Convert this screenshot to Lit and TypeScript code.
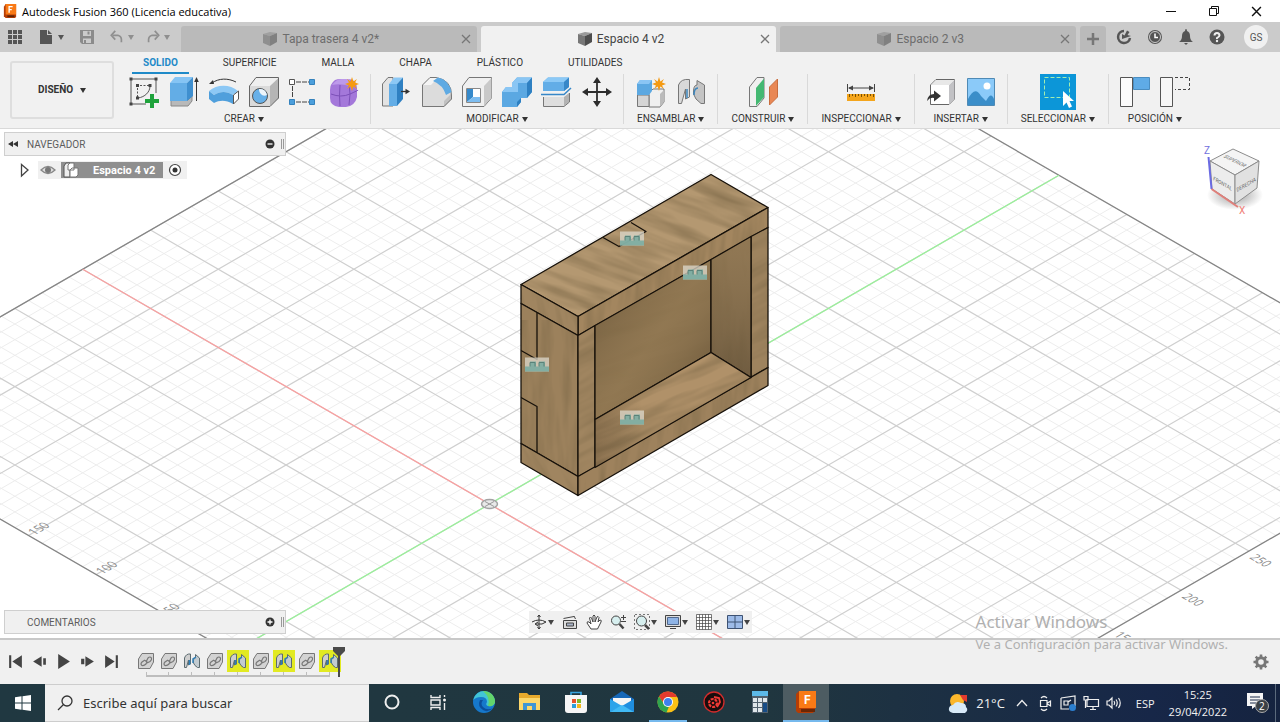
import { LitElement, html, svg, css, TemplateResult } from 'lit';
import { customElement } from 'lit/decorators.js';
import { classMap } from 'lit/directives/class-map.js';

type Glyph = TemplateResult;

/* ---------- ribbon glyphs, 32 x 32 ---------- */
const star = (x: number, y: number) =>
  svg`<path transform="translate(${x} ${y})" fill="#f59a12" d="M0-7 1.4-2.6 5-5 3-1.4 7 0 3 1.4 5 5 1.4 2.6 0 7-1.4 2.6-5 5-3 1.4-7 0-3-1.4-5-5-1.4-2.6Z"/>`;

const ribbon: Record<string, Glyph> = {
  sketch: svg`<g fill="none" stroke="#555"><path d="M4 3H27M3 4V27M28 4V17M4 28H18"/><path d="M9.500 21V9.500H22" stroke-dasharray="2 1.500"/><path d="M22 10c0 6-5 11-12 12"/></g>
    <g fill="#444"><path d="M1.500 1.500h3v3h-3zM26.500 1.500h3v3h-3zM1.500 26.500h3v3h-3zM8 8h3v3h-3zM20.500 8h3v3h-3zM8 20.500h3v3h-3z"/></g>
    <path fill="#1fa33c" d="M22 18h4v5h5v4h-5v5h-4v-5h-5v-4h5z"/>`,
  extrude: svg`<path fill="#b9b9b9" stroke="#888" d="M3 28V24H20L24 20V25L20 30H3Z"/><path fill="#63ade6" d="M2 25V7H19V25Z"/><path fill="#85c4f4" d="M2 7 7 1H25L19 7Z"/><path fill="#3f8fcf" d="M19 7 25 1V20L19 25Z"/><path stroke="#333" fill="none" d="M28.500 25V5"/><path fill="#333" d="M28.500 1 30.800 6H26.200Z"/>`,
  revolve: svg`<path fill="none" stroke="#333" d="M4 7C11 2 20 2 28 6"/><path fill="#333" d="M1 8 5 4 6 8Z"/><path fill="#8cc8f5" d="M1 15C9 8 22 8 30 15L25 19C19 15 12 15 6 19Z"/><path fill="#4f9fdc" d="M1 15 6 19C12 15 19 15 25 19V28C18 24 12 24 6 27L1 23Z"/><path fill="#fff" stroke="#555" d="M25.500 19 30.500 15V23L25.500 28Z"/>`,
  hole: svg`<path fill="#dadada" d="M1 10H22V30H1Z"/><path fill="#efefef" d="M1 10 8 1.500H31L22 10Z"/><path fill="#b5b5b5" d="M22 10 31 1.500V22L22 30Z"/><path fill="none" stroke="#666" d="M1.500 10 8 1.500H30.500V22L22 30.500H1.500Z"/><circle cx="12" cy="20" r="7.500" fill="#68b0e8" stroke="#555"/><path fill="#eef5fb" d="M11 13A7 7 0 0 1 19 19C15 21 11 18 11 13Z"/>`,
  pattern: svg`<path fill="none" stroke="#444" d="M8 6H21M4.500 10V22M8 26H21" stroke-dasharray="5 1"/><path fill="#fff" stroke="#555" d="M1.500 3.500h5v5h-5z"/><path fill="#4c9fdc" stroke="#3582bc" d="M21.500 3.500h5v5h-5zM1.500 23.500h5v5h-5zM21.500 23.500h5v5h-5z"/>`,
  form: svg`<path fill="#a478da" d="M7 4Q2 8 2 14V22Q2 30 11 31H18Q27 30 29 21V12Q29 4 21 3H13Q9 3 7 4Z"/><path fill="#bd9aea" d="M4 9Q9 2 15 3H22L22 10Q12 7 4 9Z"/><path fill="none" stroke="#7c50b8" d="M3 18Q13 22 22 18T30 14M12 9Q11 20 12 30M21 8Q23 18 21 29"/>${star(24, 8)}`,
  press: svg`<path fill="#e3e3e3" stroke="#777" d="M1.500 8 7 1.500H12V30H1.500Z"/><path fill="#63ade6" d="M8 8H16V30H8Z"/><path fill="#8cc8f5" d="M8 8 13 1.500H22L16 8Z"/><path fill="#2f80c2" d="M16 8 22 1.500V23L16 30Z"/><path fill="none" stroke="#333" stroke-width="1.300" d="M20 15.500H26"/><path fill="#333" d="M29 15.500 24.500 18.200V12.800Z"/>`,
  fillet: svg`<path fill="#dcdcdc" d="M1 9 9 1.500H15Q31 4 31 20V23L23 31H1Z"/><path fill="#f4f4f4" d="M1 9 9 1.500H17L10 9Z"/><path fill="#c1c1c1" d="M23 25 31 17V23L23 31Z"/><path fill="none" stroke="#777" d="M1.500 9 9 1.500H15Q31 4 30.500 20V23L23 30.500H1.500Z"/><path fill="#5faae3" d="M12 5 17 1.500Q28 4 30.500 16L25 19Q22 9 12 5Z"/>`,
  shell: svg`<path fill="#f0f0f0" stroke="#777" d="M1.500 10 8 1.500H30.500V22L23 30.500H1.500Z"/><path fill="#c9c9c9" d="M23 10 30.500 2V22L23 30Z"/><path fill="#fff" stroke="#888" d="M5.500 12.500H19.500V26.500H5.500Z"/><path fill="#368acb" d="M6 13H12V21L6 26Z"/><path fill="#7dbdf0" d="M12 21H19V26H6Z"/>`,
  combine: svg`<path fill="#5ba8e2" d="M1 16 5 11H11V7L16 1.500H31V16L26 22H20V26L16 31H1Z"/><path fill="#8ac6f4" d="M1 16 5 11H11V7L16 1.500H31L26 7H17V16Z"/><path fill="#2e80c2" d="M26 7 31 1.500V16L26 22ZM16 26 20 22V26L16 31Z"/>`,
  split: svg`<path fill="#62ade7" d="M2 6 7 1.500H28V11L23 15H2Z"/><path fill="#8cc9f6" d="M2 6 7 1.500H28L23 6Z"/><path fill="#3787c8" d="M23 6 28 1.500V11L23 15Z"/><path fill="none" stroke="#3787c8" stroke-width="1.500" d="M0 18.500H23L30 12"/><path fill="#dedede" d="M2 21H23V30H2Z"/><path fill="#b2b2b2" d="M23 21 28 17V26L23 30Z"/><path fill="none" stroke="#777" d="M2.500 21V30.500H23L28.500 26V17"/>`,
  move: svg`<path stroke="#2d2d2d" stroke-width="1.800" d="M16 5V27M5 16H27"/><path fill="#2d2d2d" d="M16 1 20 7H12ZM16 31 20 25H12ZM1 16 7 12V20ZM31 16 25 12V20Z"/>`,
  component: svg`<path fill="#f0f0f0" stroke="#777" d="M14 17 18 13H29V26L25 31H14Z"/><path fill="#bbb" d="M25 18 29 14V26L25 31Z"/><path fill="#d5d5d5" stroke="#777" d="M2.500 19H14V30.500H2.500Z"/><path fill="#5ca8e1" d="M2 8 5 4H17V15L14 19H2Z"/><path fill="#8ac5f4" d="M2 8 5 4H17L14 8Z"/>${star(24, 8)}`,
  joint: svg`<path fill="#d9d9d9" stroke="#777" d="M3.500 9Q6 2.500 14.500 3.500V21L10.500 23V13L6.500 27.500H3.500Z"/><path fill="#c4c4c4" stroke="#777" d="M29.500 9 22 4.500V9Q18 9 18.500 18L21 23 26 27.500H29.500Z"/><path stroke="#3d86bd" stroke-width="1.500" fill="none" d="M12 22V13M19 19Q19 12 23 12"/>`,
  plane: svg`<path fill="#f0f0f0" stroke="#777" d="M2.500 11 10 1.500H17V22L10 30.500H2.500Z"/><path fill="#44b872" d="M9 12 17 2.500V21L9 30Z"/><path fill="#e98855" stroke="#c86d3e" d="M22.500 11 30.500 3V21L22.500 29Z"/>`,
  measure: svg`<path stroke="#444" d="M2.500 8V16M29.500 8V16M4 12H28"/><path fill="#444" d="M3 12 8 9.500V14.500ZM29 12 24 9.500V14.500Z"/><path fill="#f4a51c" d="M2 18H30V25H2Z"/><path stroke="#7c5000" d="M4.500 18v3M7.500 18v2M10.500 18v3M13.500 18v2M16.500 18v3M19.500 18v2M22.500 18v3M25.500 18v2M28.500 18v3"/>`,
  insert: svg`<path fill="#fff" stroke="#666" d="M5.500 9 11 3.500H29.500V23L24 28.500H5.500Z"/><path fill="#c2c2c5" d="M24 9 29.500 3.500V23L24 28.500Z"/><path fill="#e8e8e8" d="M6 9 11 4H29L24 9Z"/><path fill="#333" d="M2 25Q3 18 9 18V14.500L16 20 9 25.500V22Q5 21 2 25Z"/>`,
  canvas: svg`<path fill="#8bcaf9" stroke="#4f8ab5" d="M2.500 2.500H29.500V29.500H2.500Z"/><path fill="#3b8ec9" d="M3 23Q10 9 16 20L21 25Q26 15 29 23V29H3Z"/><circle cx="22" cy="10" r="3.500" fill="#fff"/>`,
  select: svg`<path fill="#0c96d8" d="M-2-2H34V34H-2Z"/><path fill="none" stroke="#a3edb0" stroke-dasharray="4 2" d="M2.500 1.500H27.500V21.500H2.500Z"/><path fill="#fff" d="M21 15V30L24.500 26.500 27 32 30 30.500 27.500 25H32Z"/>`,
  capture: svg`<path fill="#fbfbfb" stroke="#555" d="M1.500 1.500H13.500V30.500H1.500Z"/><path fill="#5fabe6" stroke="#4a8dc0" d="M14.500 1.500H30.500V13.500H14.500Z"/>`,
  revert: svg`<path fill="#f7f7f7" stroke="#555" d="M1.500 1.500H13.500V30.500H1.500Z"/><path fill="none" stroke="#444" stroke-dasharray="3 2" d="M16 1.500H30.500V13.500H16"/>`,
};

/* ---------- 16 x 16 glyphs ---------- */
const small: Record<string, Glyph> = {
  grid: svg`<path fill="#555" d="M1 1h4v4H1zM6 1h4v4H6zM11 1h4v4h-4zM1 6h4v4H1zM6 6h4v4H6zM11 6h4v4h-4zM1 11h4v4H1zM6 11h4v4H6zM11 11h4v4h-4z"/>`,
  file: svg`<path fill="#555" d="M2 1H9V6H14V15H2Z"/><path fill="#555" d="M10 1 14 5H10Z"/>`,
  save: svg`<path fill="#8b8b8b" d="M1 1H15V15H3L1 13Z"/><path fill="#cbcbcb" d="M4 2h8v5H4zM4 9.500h8V14H4z"/><path fill="#8b8b8b" d="M8.500 2.500h2v3h-2zM5 11h2v3H5z"/>`,
  undo: svg`<path fill="none" stroke="#8f8f8f" stroke-width="2" d="M3 6H9Q14 7 13 14"/><path fill="none" stroke="#8f8f8f" stroke-width="2" d="M6 1 1.500 6 6 11"/>`,
  redo: svg`<path fill="none" stroke="#8f8f8f" stroke-width="2" d="M13 6H7Q2 7 3 14"/><path fill="none" stroke="#8f8f8f" stroke-width="2" d="M10 1 14.500 6 10 11"/>`,
  refresh: svg`<path fill="none" stroke="#555" stroke-width="2.500" d="M8 2A6 6 0 1 0 14 9"/><path fill="#555" d="M6 10V5L8.500 6.500 11 1.500 13.500 3 11.500 6 15 7Z"/>`,
  clock: svg`<circle cx="8" cy="8" r="7" fill="#555"/><circle cx="8" cy="8" r="5.500" fill="none" stroke="#cbcbcb"/><path fill="none" stroke="#fff" stroke-width="1.500" d="M8 4.500V8.500H11"/>`,
  bell: svg`<path fill="#555" d="M8 0Q9 0 9 2 12 3 12 7 12 11 15 13H1Q4 11 4 7 4 3 7 2 7 0 8 0ZM6 14H10L8 16Z"/>`,
  help: svg`<circle cx="8" cy="8" r="7.500" fill="#555"/><path fill="none" stroke="#eee" stroke-width="2" d="M5.500 6.500Q5.500 4 8 4T10.500 6.500Q10.500 7.500 8 9V10"/><circle cx="8" cy="12" r="1.200" fill="#eee"/>`,
  first: svg`<path fill="#444" d="M2 2H4V14H2ZM14 2V14L5 8Z"/>`,
  prev: svg`<path fill="#444" d="M10 3V13L2 8ZM11.500 5H14V11H11.500Z"/>`,
  play: svg`<path fill="#444" d="M3 1 14 8 3 15Z"/>`,
  next: svg`<path fill="#444" d="M6 3V13L14 8ZM2 5.500H5V10.500H2Z"/>`,
  last: svg`<path fill="#444" d="M12 2H14V14H12ZM2 2V14L11 8Z"/>`,
  rigid: svg`<path fill="#d3d3d3" stroke="#777" d="M.500 6 4 .500H15.500V9L12 15.500H.500Z"/><path fill="none" stroke="#777" stroke-width="1.200" d="M7 7 4 9Q2 11 4 12.500 6 13 8 11L9 9Q8 7 7 8M8 9 10 5Q12 3 13.500 5 14 7 12 8.500L9 10"/>`,
  jointSmall: svg`<path fill="#cfcfcf" stroke="#5c6b70" d="M.500 5Q2 .500 6.500 1V11L4.500 12V7L2.500 14.500H.500Z"/><path fill="#c2cbd0" stroke="#5c6b70" d="M15.500 5 11.500 1.500V5Q9 5 9.500 10L11 12.500 13.500 14.500H15.500Z"/><path stroke="#2f7fb8" stroke-width="1.500" fill="none" d="M5.500 12V7M9 10V6L12 4"/>`,
  gear: svg`<circle cx="8" cy="8" r="4.300" fill="none" stroke="#777" stroke-width="3"/><path stroke="#777" stroke-width="2.600" d="M8 .500V3M8 13V15.500M.500 8H3M13 8H15.500M2.700 2.700 4.400 4.400M11.600 11.600 13.300 13.300M2.700 13.300 4.400 11.600M11.600 4.400 13.300 2.700"/>`,
  orbit: svg`<path fill="none" stroke="#333" d="M8 1V15M6.500 3 8 1 9.500 3M6.500 13 8 15 9.500 13M1 8Q8 4 15 8Q12 11 5 10M7 8 4 10 7 12"/>`,
  look: svg`<path fill="#ddd" stroke="#444" d="M1.500 6.500H14.500V14.500H1.500Z"/><path fill="#aab4c8" stroke="#444" d="M4.500 9H11.500V12H4.500ZM1.500 4.500 12 2.500M12 2 13.500 5"/>`,
  pan: svg`<path fill="#fff" stroke="#444" d="M5 15 1 9Q1 7 3 8L5 10 3.500 4Q4.500 2 5.500 4L7 8V2Q8 0 9 2V8L11 3Q12 1.500 13 3.500L12 8 14 6Q16 6 15 8L11.500 15Z"/>`,
  zoom: svg`<circle cx="6" cy="6.500" r="4.500" fill="#d7efef" stroke="#444"/><path stroke="#444" stroke-width="2.500" d="M9.500 10 13.500 14.500"/><path stroke="#444" d="M11 3.500H16M13.500 1V6M11 7.500H16"/>`,
  fit: svg`<path fill="none" stroke="#777" stroke-dasharray="2 2" d="M1 .500H15.500V15M.500 1V15.500H12"/><circle cx="7.500" cy="7" r="5" fill="#d7efef" stroke="#444"/><path stroke="#444" stroke-width="2.500" d="M11 11 15 15"/>`,
  screen: svg`<path fill="#ddd" stroke="#444" d="M.500 1.500H15.500V12.500H.500ZM5 14.500H11"/><path fill="#8fb4e6" stroke="#51698e" d="M2.500 3.500H13.500V10.500H2.500Z"/>`,
  mesh: svg`<path fill="#fff" stroke="#444" d="M.500.500H15.500V15.500H.500ZM3.500.500V15.500M6.500.500V15.500M9.500.500V15.500M12.500.500V15.500M.500 3.500H15.500M.500 6.500H15.500M.500 9.500H15.500M.500 12.500H15.500" stroke-width=".700"/>`,
  panes: svg`<path fill="#9dbbe8" stroke="#3d5273" d="M.500 1.500H15.500V14.500H.500ZM8 1.500V14.500M.500 8H15.500"/>`,
};

/* ---------- taskbar glyphs, 24 x 24 ---------- */
const apps: { name: string; art: Glyph; state?: string }[] = [
  { name: 'Cortana', art: svg`<circle cx="12" cy="12" r="6.500" fill="none" stroke="#eee" stroke-width="2"/>` },
  { name: 'Vista de tareas', art: svg`<path fill="none" stroke="#eee" stroke-width="1.400" d="M5 5V7.500H14V5M5 10H14V15H5ZM5 20V17.500H14V20M18.500 5V7M18.500 13V20"/><circle cx="18.500" cy="10" r="1.500" fill="#eee"/>` },
  { name: 'Edge', art: svg`<circle cx="12" cy="12" r="11" fill="#1678cb"/><path fill="#42c5d6" d="M1.200 10A11 11 0 0 1 23 12Q22 17 16 16 13 15 15 12 15 7 9 7 4 7 1.200 10Z"/><path fill="#63d46b" d="M11 1A11 11 0 0 1 23 12Q22 17 16 16 19 8 11 1Z"/><path fill="#0c4f9c" d="M8 10Q5 16 11 20 16 23 21 18 15 21 11 17 8 14 11 10Z"/>` },
  { name: 'Explorador', art: svg`<path fill="#e8aa2c" d="M1 3H9L11 5H22V20H1Z"/><path fill="#fcd76b" d="M1 8H22V20H1Z"/><path fill="#3f96d6" d="M5 20V13H18V20H14V16H9V20Z"/>` },
  { name: 'Store', art: svg`<path fill="none" stroke="#39a4e0" stroke-width="1.600" d="M7 6V2.500H17V6"/><path fill="#f6f6f6" d="M1 5H23V20Q23 23 20 23H4Q1 23 1 20Z"/><path fill="#e5532d" d="M8 9h4v4H8z"/><path fill="#7fb829" d="M13 9h4v4h-4z"/><path fill="#2a9fdc" d="M8 14h4v4H8z"/><path fill="#f5b81a" d="M13 14h4v4h-4z"/>` },
  { name: 'Correo', art: svg`<path fill="#1668b8" d="M0 9 12 1 24 9V22H0Z"/><path fill="#f5f5f5" d="M3 8H21V15L12 19 3 15Z"/><path fill="#2da4ea" d="M0 9 12 16 0 22Z"/><path fill="#1f8fe0" d="M24 9 12 16 24 22Z"/><path fill="#41baf5" d="M0 22 12 15 24 22Z"/>` },
  { name: 'Chrome', state: 'running', art: svg`<circle cx="12" cy="12" r="10.500" fill="#fbc116"/><path fill="#e33b2e" d="M3 6.500A10.500 10.500 0 0 1 21.200 7H12L8 14Z"/><path fill="#2fa44f" d="M3 6.500 8 14 13 16.500 10.500 22.400A10.500 10.500 0 0 1 3 6.500Z"/><circle cx="12" cy="12" r="5" fill="#fff"/><circle cx="12" cy="12" r="4" fill="#3f81ee"/>` },
  { name: 'Grabadora', art: svg`<circle cx="12" cy="12" r="10" fill="#190d0d" stroke="#d42c2c" stroke-width="1.300"/><circle cx="11" cy="13" r="4" fill="none" stroke="#f03a35" stroke-width="2.200" stroke-dasharray="3 1"/><circle cx="11" cy="13" r="1.300" fill="#f03a35"/><path fill="none" stroke="#f03a35" stroke-width="1.800" d="M12 7 17 8 18 12 15 17"/>` },
  { name: 'Calculadora', art: svg`<path fill="#51616e" d="M4 1H20V23H4Z"/><path fill="#5cb9e8" d="M4 1H20V6H4Z"/><path fill="#dfe6ea" d="M5 8h4v4H5zM10 8h4v4h-4zM15 8h4v4h-4zM5 13h4v4H5zM10 13h4v4h-4zM5 18h4v4H5zM10 18h4v4h-4z"/><path fill="#174c86" d="M15 13h4v9h-4z"/>` },
  { name: 'Fusion 360', state: 'active', art: svg`<path fill="#b53d05" d="M2 4 5 1H21V20L19 23H4L2 21Z"/><path fill="#f97a16" d="M5 1H22V18H5Z"/><path fill="#6b2705" d="M7 19H21V22H7Z"/><text x="10" y="14" font-size="12" font-weight="700" fill="#fff" font-family="Roboto, sans-serif">F</text>` },
];

const icon = (art: Glyph, box = 16, size = box) =>
  html`<svg class="glyph" width=${size} height=${size} viewBox="0 0 ${box} ${box}" aria-hidden="true">${art}</svg>`;
const caret = html`<span class="caret"></span>`;

/* ---------- ground grid, in units of one major cell ---------- */
const U0 = -6, U1 = 6.2, V0 = -3.8, V1 = 8.4;
const ground = (u: number, v: number) => [489.5 + 67.8 * (u + v), 503.6 + 39.15 * (u - v)];
const segment = (a: number[], b: number[]) => {
  const [x1, y1] = ground(a[0], a[1]);
  const [x2, y2] = ground(b[0], b[1]);
  return `M${x1.toFixed(1)} ${y1.toFixed(1)}L${x2.toFixed(1)} ${y2.toFixed(1)}`;
};
function gridPaths() {
  let minor = '', major = '';
  for (let i = -30; i <= 42; i++) {
    const t = i / 5;
    const isMajor = i % 5 === 0;
    let d = '';
    if (t >= U0 && t <= U1) d += segment([t, V0], [t, V1]);
    if (t >= V0 && t <= V1) d += segment([U0, t], [U1, t]);
    if (isMajor) major += d; else minor += d;
  }
  return { minor, major };
}

interface Face { id: string; pts: string; fill: string; grain: string; shade?: string }
const faces: Face[] = [
  { id: 'top', pts: '521,284 711,174 768,207 578,316', fill: '#b49871', grain: 'rotate(20 640 250)' },
  { id: 'rail-top', pts: '578,316 768,207 768,227 578,335', fill: '#a3865f', grain: 'rotate(94 640 270)' },
  { id: 'side-top', pts: '521,284 578,316 578,335 521,303', fill: '#a08560', grain: 'rotate(80 550 310)' },
  { id: 'side', pts: '521,303 578,335 578,476 521,443', fill: '#9c815c', grain: 'rotate(90 550 390)' },
  { id: 'side-low', pts: '521,443 578,476 578,495 521,462', fill: '#a08560', grain: 'rotate(60 550 470)' },
  { id: 'post-left', pts: '578,335 595,325 595,467 578,476', fill: '#a08560', grain: 'rotate(-28 586 400)' },
  { id: 'post-right', pts: '751,236 768,227 768,367 751,377', fill: '#9e835e', grain: 'rotate(-28 760 300)' },
  { id: 'rail-low', pts: '578,476 768,367 768,385 578,495', fill: '#9e825d', grain: 'rotate(94 670 430)' },
  { id: 'back', pts: '595,325 711,259 711,352 595,419', fill: '#86704f', grain: 'rotate(-18 650 340)', shade: 'url(#shade-back)' },
  { id: 'inner', pts: '711,259 751,236 751,377 711,352', fill: '#8b7453', grain: 'rotate(90 730 300)', shade: 'url(#shade-inner)' },
  { id: 'floor', pts: '595,419 711,352 751,377 595,467', fill: '#b09169', grain: 'rotate(-22 670 410)', shade: 'url(#shade-floor)' },
];
const badges = [[620, 231], [683, 265], [525, 357], [620, 410]];

@customElement('model-scene')
class ModelScene extends LitElement {
  static styles = css`
    :host { display: block; min-width: 0; min-height: 0; overflow: hidden; background: #fff; }
    .scene { display: block; width: 100%; height: 100%; }
    .minor { fill: none; stroke: #ededed; stroke-width: 1; }
    .major { fill: none; stroke: #cfcfcf; stroke-width: 1.2; }
    .border { fill: none; stroke: #858585; stroke-width: 1.3; }
    .axis-x { stroke: #f9a0a0; stroke-width: 1.3; }
    .axis-y { stroke: #9af09a; stroke-width: 1.3; }
    .mark { font: 11px "Open Sans", sans-serif; fill: #8a8a8a; }
    .edge { fill: none; stroke: #17110a; stroke-width: 1.3; stroke-linejoin: round; }
  `;
  render() {
    const { minor, major } = gridPaths();
    const mark = (u: number, v: number, text: string, turn: string, dx: number, dy: number) => {
      const [x, y] = ground(u, v);
      return svg`<text class="mark" transform="translate(${x + dx} ${y + dy}) ${turn}">${text}</text>`;
    };
    const up = 'rotate(-30) skewX(30)';
    const down = 'rotate(30) skewX(-30)';
    return html`<svg class="scene" viewBox="0 128 1280 510" preserveAspectRatio="xMidYMid slice" role="img" aria-label="Modelo Espacio 4 v2">
      <defs>
        <filter id="wood" x="0" y="0" width="100%" height="100%">
          <feTurbulence type="fractalNoise" baseFrequency="0.012 0.08" numOctaves="3" seed="11"/>
          <feColorMatrix values="0 0 0 0 0.22  0 0 0 0 0.15  0 0 0 0 0.07  1.5 0 0 0 -0.56"/>
        </filter>
        <linearGradient id="shade-back" x1="0" y1="0" x2="1" y2="1"><stop offset="0" stop-color="#2b1d0c" stop-opacity=".3"/><stop offset=".5" stop-color="#c39b62" stop-opacity=".18"/><stop offset="1" stop-color="#20160a" stop-opacity=".4"/></linearGradient>
        <linearGradient id="shade-inner" x1="0" y1="0" x2="0" y2="1"><stop offset="0" stop-color="#b8935f" stop-opacity=".15"/><stop offset="1" stop-color="#20160a" stop-opacity=".25"/></linearGradient>
        <linearGradient id="shade-floor" x1="0" y1="0" x2="1" y2="0"><stop offset="0" stop-color="#2b1d0c" stop-opacity=".25"/><stop offset=".3" stop-color="#2b1d0c" stop-opacity="0"/></linearGradient>
        ${faces.map(f => svg`<clipPath id="clip-${f.id}"><polygon points=${f.pts}></polygon></clipPath>`)}
      </defs>
      <path class="minor" d=${minor}></path>
      <path class="major" d=${major}></path>
      <path class="border" d="${segment([U0, V0], [U0, V1])}${segment([U1, V0], [U1, V1])}${segment([U0, V0], [U1, V0])}${segment([U0, V1], [U1, V1])}"></path>
      <path class="axis-x" d=${segment([U0, 0], [U1, 0])}></path>
      <path class="axis-y" d=${segment([0, V0], [0, V1])}></path>
      ${mark(-3, V0, '150', up, 6, 0)}
      ${mark(-2, V0, '100', up, 6, 0)}
      ${mark(-1, V0, '50', up, 6, 0)}
      ${mark(U1, 5, '250', down, 0, 7)}
      ${mark(U1, 4, '200', down, 0, 7)}
      ${mark(U1, 3, '150', down, 0, 6)}
      <ellipse cx="489.500" cy="503.500" rx="8" ry="4.500" fill="#e9e9e9" stroke="#a3a3a3" stroke-width="1.500"></ellipse>
      <path d="M485 501 494 506M485 506 494 501" stroke="#999"></path>
      ${faces.map(f => svg`
        <polygon points=${f.pts} fill=${f.fill}></polygon>
        <g clip-path="url(#clip-${f.id})"><rect x="480" y="150" width="330" height="370" filter="url(#wood)" transform=${f.grain}></rect></g>
        ${f.shade ? svg`<polygon points=${f.pts} fill=${f.shade}></polygon>` : ''}
        <polygon class="edge" points=${f.pts}></polygon>`)}
      <path class="edge" d="M603 237 619 246 646 231 631 222M537 312V359L521 350M521 397 537 406V452"></path>
      ${badges.map(([x, y]) => svg`<g transform="translate(${x} ${y})">
        <rect width="24" height="14" fill="#ded9cd" opacity=".75"></rect>
        <path fill="#76aaa0" opacity=".85" d="M0 9H5V4H11V9H14V4H20V9H24V14H0Z"></path>
        <path fill="none" stroke="#5a8279" d="M5 9V5H10V9M14 9V5H19V9"></path></g>`)}
    </svg>`;
  }
}

@customElement('app-root')
class AppRoot extends LitElement {
  static styles = css`
    :host { display: flex; flex-direction: column; height: 100vh; position: relative; overflow: hidden; color: #333; font-family: Roboto, "Liberation Sans", sans-serif; }
    * { box-sizing: border-box; }
    button, input, select { font: inherit; color: inherit; border: 0; padding: 0; margin: 0; background: none; }
    button { display: inline-flex; align-items: center; justify-content: center; }
    .glyph { display: block; flex: none; overflow: visible; }
    .caret { flex: none; border: 3px solid transparent; border-top: 5px solid currentColor; border-bottom: 0; }

    .titlebar { height: 22px; display: flex; align-items: center; background: #fff; padding-left: 3px; color: #000; font: 11px "Open Sans", sans-serif; }
    .titlebar h1 { font: inherit; margin: 0 auto 0 5px; }
    .titlebar button { width: 43px; height: 20px; }
    .titlebar button:last-child { margin-right: 2px; }

    .documents { height: 30px; display: flex; background: #cbcbcb; }
    .quick { width: 181px; display: flex; align-items: center; padding-left: 7px; }
    .quick button { gap: 4px; margin-right: 15px; height: 30px; color: #555; }
    .quick .dim { color: #8f8f8f; margin-right: 12px; }
    .tabs { flex: 1; display: flex; gap: 4px; padding-top: 4px; min-width: 0; }
    .doc { flex: 1; display: flex; align-items: center; padding-right: 6px; background: #bababa; color: #6d6d6d; border-radius: 3px 3px 0 0; font-size: 12px; min-width: 0; }
    .doc.current { background: #f1f1f1; color: #444; }
    .doc-name { flex: 1; gap: 4px; height: 26px; }
    .add { width: 26px; background: #bababa; border-radius: 3px 3px 0 0; }
    .account { width: 174px; display: flex; align-items: center; gap: 15px; padding-left: 10px; }
    .avatar { width: 24px; height: 24px; border-radius: 50%; background: #f0f0f0; font-size: 10px; color: #555; margin-left: 4px; }

    .ribbon { height: 77px; display: flex; background: #f1f1f1; border-bottom: 1px solid #d9d9d9; }
    .workspace { width: 104px; height: 58px; margin: 9px 4px 0 10px; display: flex; align-items: center; justify-content: center; gap: 6px; border: 2px solid #dedede; border-radius: 3px; font-size: 10px; font-weight: 700; }
    .workspace select { appearance: none; height: 20px; line-height: 20px; }
    .tools { flex: 1; }
    .modes { display: flex; gap: 23px; padding-left: 14px; font-size: 10px; }
    .modes button { height: 22px; padding: 0 11px; border-bottom: 2px solid transparent; }
    .modes .current { color: #1f8ac8; border-color: #1f8ac8; font-weight: 700; }
    .groups { display: flex; }
    .group { display: flex; flex-direction: column; align-items: center; gap: 5px; padding: 2px 10px 0; border-right: 1px solid #d9d9d9; height: 50px; }
    .group:last-child { border: 0; }
    .icons { display: flex; gap: 8px; }
    .group-name { font-size: 10px; line-height: 12px; gap: 3px; padding: 0 3px; }

    .viewport { flex: 1; min-height: 0; display: grid; grid-template: minmax(0, 1fr) / minmax(0, 1fr); }
    .viewport > * { grid-area: 1 / 1; }
    .panels { display: flex; flex-direction: column; align-items: flex-start; padding: 3px 4px 4px; z-index: 1; pointer-events: none; }
    .panel { width: 282px; height: 24px; display: flex; align-items: center; background: #f0f0f0; border: 1px solid #cfcfcf; font-size: 10px; color: #5c5c5c; padding: 0 1px 0 3px; }
    .panel h2 { font: inherit; margin: 0 auto 0 0; }
    .panel .lead { width: 19px; justify-content: flex-start; }
    .grip { width: 3px; height: 10px; border: solid #999; border-width: 0 1px; margin-left: 6px; }
    .panel.low { margin-top: auto; }
    .tree { display: flex; align-items: center; height: 18px; margin: 5px 0 0 14px; }
    .node { display: flex; align-items: center; background: #f0f0f0; margin-left: 6px; padding: 0 5px 0 2px; height: 18px; gap: 5px; }
    .node-name { height: 16px; background: #8f8f8f; color: #fff; font-size: 11px; font-weight: 700; padding: 0 8px 0 2px; gap: 14px; }
    .cube { justify-self: end; width: 90px; height: 96px; z-index: 1; }
    .viewbar { justify-self: center; align-self: end; display: flex; align-items: center; gap: 8px; height: 22px; margin-bottom: 5px; padding: 0 2px; background: #f0f0f0; z-index: 1; color: #444; }
    .viewbar button { gap: 1px; }

    .timeline { height: 46px; display: flex; align-items: flex-start; background: #f0f0f0; border-top: 2px solid #c8c8c8; padding: 10px 11px 0 7px; }
    .playback { display: flex; gap: 7px; padding-top: 3px; margin-right: 14px; }
    .track { display: flex; }
    .step { flex-direction: column; width: 23px; height: 28px; justify-content: flex-start; }
    .face { display: grid; place-items: center; width: 22px; height: 22px; }
    .step.hot .face { background: #e2ea22; }
    .stem { width: 100%; height: 5px; border-bottom: 2px solid #bdbdbd; background: linear-gradient(#bdbdbd, #bdbdbd) center / 1px 100% no-repeat; }
    .step:first-child .stem { width: 50%; align-self: flex-end; border-left: 1px solid #bdbdbd; background: none; }
    .step:nth-last-child(2) .stem { width: 50%; align-self: flex-start; border-right: 1px solid #bdbdbd; background: none; }
    .marker { margin: -4px 0 0 -9px; }
    .settings { margin: 4px 0 0 auto; }
    .watermark { position: absolute; right: 52px; bottom: 68px; z-index: 2; color: #b0b0b0; font: 13px/20px "Noto Sans", sans-serif; pointer-events: none; }
    .watermark strong { display: block; font-size: 17px; line-height: 24px; font-weight: 400; }

    .taskbar { height: 38px; display: flex; align-items: stretch; color: #f2f2f2; background: linear-gradient(90deg, #203841, #20363f 60%, #172748 90%, #15233f); font: 12px "Open Sans", sans-serif; }
    .start { width: 45px; }
    .search { width: 324px; display: flex; align-items: center; gap: 10px; padding-left: 12px; background: #f0f0f0; color: #333; border: solid #cdcdcd; border-width: 1px 0; }
    .search input { flex: 1; min-width: 0; font: 13px "Noto Sans", sans-serif; outline: 0; }
    .search input::placeholder { color: #333; opacity: 1; }
    .app { width: 46px; border-bottom: 2px solid transparent; }
    .app.running { background: linear-gradient(#76b9ed, #76b9ed) bottom / 38px 2px no-repeat; background-origin: border-box; }
    .app.active { background: #4d5c62; border-color: #76b9ed; }
    .tray { margin-left: auto; display: flex; align-items: center; gap: 7px; padding-right: 4px; }
    .weather { gap: 8px; font-size: 13px; margin-right: 2px; }
    .lang { font-size: 11px; margin: 0 7px; }
    .clock { font-size: 11px; line-height: 17px; text-align: center; margin-right: 12px; }
    .peek { border-left: 1px solid #5b6a7c; width: 1px; align-self: stretch; }
  `;

  private docs = [
    { name: 'Tapa trasera 4 v2*', current: false },
    { name: 'Espacio 4 v2', current: true },
    { name: 'Espacio 2 v3', current: false },
  ];
  private modes = ['SOLIDO', 'SUPERFICIE', 'MALLA', 'CHAPA', 'PLÁSTICO', 'UTILIDADES'];
  private groups: [string, string[]][] = [
    ['CREAR', ['sketch', 'extrude', 'revolve', 'hole', 'pattern', 'form']],
    ['MODIFICAR', ['press', 'fillet', 'shell', 'combine', 'split', 'move']],
    ['ENSAMBLAR', ['component', 'joint']],
    ['CONSTRUIR', ['plane']],
    ['INSPECCIONAR', ['measure']],
    ['INSERTAR', ['insert', 'canvas']],
    ['SELECCIONAR', ['select']],
    ['POSICIÓN', ['capture', 'revert']],
  ];
  private steps = 'rrjrJrJrJ'.split('');
  private views: [string, boolean][] = [['orbit', true], ['look', false], ['pan', false], ['zoom', false], ['fit', true], ['screen', true], ['mesh', true], ['panes', true]];

  private cross(size: number, color: string) {
    return html`<svg class="glyph" width=${size} height=${size} viewBox="0 0 10 10" aria-hidden="true"><path d="M1 1 9 9M9 1 1 9" fill="none" stroke=${color} stroke-width="1.300"></path></svg>`;
  }

  private header() {
    return html`
      <header class="titlebar">
        ${icon(svg`<path fill="#b53d05" d="M1 3 3 0H15V14L14 16H3L1 14Z"/><path fill="#f97a16" d="M3 0H15V12H3Z"/><path fill="#5c2205" d="M5 13H13V15H5Z"/><path stroke="#fff" stroke-width="1.500" fill="none" d="M7 10V3H11M7 6.500H10"/>`, 16, 14)}
        <h1>Autodesk Fusion 360 (Licencia educativa)</h1>
        <button aria-label="Minimizar">${icon(svg`<path stroke="#111" d="M0 5.500H10"/>`, 10)}</button>
        <button aria-label="Restaurar">${icon(svg`<path fill="none" stroke="#111" d="M.500 2.500H7.500V9.500H.500ZM2.500 2V.500H9.500V7.500H8"/>`, 10)}</button>
        <button aria-label="Cerrar">${this.cross(11, '#111')}</button>
      </header>
      <nav class="documents">
        <div class="quick">
          <button aria-label="Panel de datos">${icon(small.grid)}</button>
          <button aria-label="Archivo">${icon(small.file)}${caret}</button>
          <button aria-label="Guardar">${icon(small.save)}</button>
          <button class="dim" aria-label="Deshacer">${icon(small.undo, 16, 14)}${caret}</button>
          <button class="dim" aria-label="Rehacer">${icon(small.redo, 16, 14)}${caret}</button>
        </div>
        <div class="tabs">
          ${this.docs.map(d => html`<div class=${classMap({ doc: true, current: d.current })}>
            <button class="doc-name">${icon(svg`<path fill=${d.current ? '#9a9a9a' : '#a0a0a0'} d="M1 3 8 1 15 2 8 5Z"/><path fill=${d.current ? '#777' : '#8f8f8f'} d="M1 3 8 5V15L1 12Z"/><path fill=${d.current ? '#4d4d4d' : '#808080'} d="M8 5 15 2V11L8 15Z"/>`)}${d.name}</button>
            <button aria-label="Cerrar ${d.name}">${this.cross(10, '#777')}</button>
          </div>`)}
          <button class="add" aria-label="Nuevo diseño">${icon(svg`<path stroke="#777" stroke-width="2.500" d="M6 0V12M0 6H12"/>`, 12)}</button>
        </div>
        <div class="account">
          ${[['refresh', 'Actualizar'], ['clock', 'Estado del trabajo'], ['bell', 'Notificaciones'], ['help', 'Ayuda']].map(([k, n]) => html`<button aria-label=${n}>${icon(small[k])}</button>`)}
          <button class="avatar">GS</button>
        </div>
      </nav>
      <section class="ribbon">
        <label class="workspace"><select aria-label="Espacio de trabajo"><option>DISEÑO</option></select>${caret}</label>
        <div class="tools">
          <div class="modes">${this.modes.map((m, i) => html`<button class=${classMap({ current: i === 0 })}>${m}</button>`)}</div>
          <div class="groups">${this.groups.map(([name, keys]) => html`<div class="group">
            <div class="icons">${keys.map(k => html`<button aria-label=${name}>${icon(ribbon[k], 32)}</button>`)}</div>
            <button class="group-name" aria-haspopup="menu">${name}${caret}</button>
          </div>`)}</div>
        </div>
      </section>`;
  }

  private view() {
    return html`<main class="viewport">
      <model-scene></model-scene>
      <div class="panels">
        <div class="panel"><button class="lead" aria-label="Contraer">${icon(svg`<path fill="#333" d="M5 2V8L0 5ZM10 2V8L5 5Z"/>`, 10)}</button><h2>NAVEGADOR</h2>
          <button aria-label="Ocultar">${icon(svg`<circle cx="5" cy="5" r="4.500" fill="#333"/><path stroke="#fff" stroke-width="1.300" d="M2.500 5H7.500"/>`, 10)}</button><span class="grip"></span></div>
        <div class="tree">
          <button aria-label="Expandir">${icon(svg`<path fill="#fff" stroke="#444" stroke-width="1.300" d="M3.500 1.500 10 7 3.500 13Z"/>`, 14)}</button>
          <div class="node">
            <button aria-label="Visibilidad">${icon(svg`<path fill="#ddd" stroke="#888" stroke-width="1.300" d="M1 8Q8 1 15 8Q8 15 1 8Z"/><circle cx="8" cy="8" r="3" fill="#777"/>`)}</button>
            <button class="node-name">${icon(svg`<path fill="#eee" stroke="#555" d="M1 4 3 1H7V15H1Z"/><path fill="#fff" stroke="#777" d="M5 3 7 1H11V8H5ZM7 8 9 6H15V13L13 15H7Z"/>`)}Espacio 4 v2</button>
            <button aria-label="Activar componente">${icon(svg`<circle cx="7" cy="7" r="5.500" fill="#fff" stroke="#444" stroke-width="1.200"/><circle cx="7" cy="7" r="2.500" fill="#333"/>`, 14)}</button>
          </div>
        </div>
        <div class="panel low"><span class="lead"></span><h2>COMENTARIOS</h2>
          <button aria-label="Mostrar">${icon(svg`<circle cx="5" cy="5" r="4.500" fill="#333"/><path stroke="#fff" stroke-width="1.300" d="M2.500 5H7.500M5 2.500V7.500"/>`, 10)}</button><span class="grip"></span></div>
      </div>
      <svg class="cube" viewBox="1190 128 90 96" role="img" aria-label="ViewCube">
        <defs><radialGradient id="soft"><stop offset=".4" stop-color="#888" stop-opacity=".5"/><stop offset="1" stop-color="#888" stop-opacity="0"/></radialGradient></defs>
        <ellipse cx="1235" cy="194" rx="28" ry="15" fill="url(#soft)"/>
        <path fill="#f4f4f4" stroke="#8c8c8c" d="M1210 160 1233 148 1259 160 1235 174Z"/>
        <path fill="#ececec" stroke="#8c8c8c" d="M1210 160 1235 174V203L1212 188Z"/>
        <path fill="#e1e1e1" stroke="#8c8c8c" d="M1235 174 1259 160 1257 187 1235 203Z"/>
        <g fill="#666" font-family="Roboto, sans-serif" font-size="5"><text transform="translate(1223 156) rotate(26) skewX(-30)">SUPERIOR</text><text transform="translate(1213 179) rotate(30) skewX(20)">FRONTAL</text><text transform="translate(1237 191) rotate(-30) skewX(-20)">DERECHA</text></g>
        <path stroke="#6a6ae2" stroke-width="2" d="M1208.500 156 1211.500 188"/><path stroke="#e07f7a" stroke-width="2" d="M1211.500 188 1238 206"/>
        <text x="1204" y="153" font-size="10" font-family="Roboto, sans-serif" fill="#7070dd">Z</text><text x="1239" y="213" font-size="10" font-family="Roboto, sans-serif" fill="#f08078">X</text>
      </svg>
      <div class="viewbar">${this.views.map(([k, menu]) => html`<button aria-label=${k}>${icon(small[k])}${menu ? caret : ''}</button>`)}</div>
    </main>`;
  }

  private footer() {
    return html`
      <section class="timeline">
        <div class="playback">${['first', 'prev', 'play', 'next', 'last'].map(k => html`<button aria-label=${k}>${icon(small[k], 16, 17)}</button>`)}</div>
        <div class="track">${this.steps.map(s => html`<button aria-label="Operación" class=${classMap({ step: true, hot: s === 'J' })}><span class="face">${icon(s === 'r' ? small.rigid : small.jointSmall)}</span><span class="stem"></span></button>`)}
          <svg class="glyph marker" width="14" height="32" viewBox="0 0 14 32" aria-hidden="true"><path fill="#4a4a4a" d="M1 1H13V5L8 10V31H6V10L1 5Z"></path></svg></div>
        <button class="settings" aria-label="Preferencias">${icon(small.gear)}</button>
      </section>
      <footer class="taskbar">
        <button class="start" aria-label="Inicio">${icon(svg`<path fill="#fff" d="M0 2.300 6.500 1.300V7.500H0ZM7.500 1.200 16 0V7.500H7.500ZM0 8.500H6.500V14.700L0 13.700ZM7.500 8.500H16V16L7.500 14.800Z"/>`)}</button>
        <label class="search">${icon(svg`<circle cx="10" cy="6" r="5" fill="none" stroke="#333" stroke-width="1.300"/><path stroke="#333" stroke-width="1.300" d="M6.500 9.500 1 15"/>`)}<input type="search" aria-label="Buscar" placeholder="Escribe aquí para buscar"></label>
        ${apps.map(a => html`<button class="app ${a.state ?? ''}" aria-label=${a.name}>${icon(a.art, 24)}</button>`)}
        <div class="tray">
          <button class="weather">${icon(svg`<circle cx="9" cy="8" r="7" fill="#fbb72c"/><path fill="#e33b2e" d="M12 2H19V9L15 7Z"/><path fill="#d8eaf8" d="M5 20Q0 19 1 15 2 12 5 12 8 7 13 10 18 10 18 14 21 17 17 20Z"/>`, 20)}21°C</button>
          <button aria-label="Mostrar iconos ocultos">${icon(svg`<path fill="none" stroke="#eee" stroke-width="1.300" d="M3 11 8 5.500 13 11"/>`)}</button>
          <button aria-label="Reunión">${icon(svg`<path fill="none" stroke="#eee" stroke-width="1.200" d="M3.500 5.500H10V11.500H3.500ZM10.500 8 13.500 6V11L10.500 9M4 3Q7 0 10 3M4 14Q7 17 10 14"/>`)}</button>
          <button aria-label="Grabación">${icon(svg`<path fill="none" stroke="#eee" stroke-width="1.200" d="M1 3 15 1V11M1 3V14H9M4 6H8V10H4ZM8 7 11 5"/><circle cx="12.500" cy="12.500" r="3.500" fill="#2c7fd0"/>`)}</button>
          <button aria-label="Red">${icon(svg`<path fill="none" stroke="#eee" stroke-width="1.200" d="M4 4.500H15.500V11.500H4ZM7 14.500H13M10 12V14M1 1.500H5V5H1ZM2.500 5V13"/>`)}</button>
          <button aria-label="Volumen">${icon(svg`<path fill="none" stroke="#eee" stroke-width="1.200" d="M1 6H3L6 3V13L3 10H1ZM8 6Q9.500 8 8 10M10 4.500Q12.500 8 10 11.500M12.500 3Q16 8 12.500 13"/>`)}</button>
          <button class="lang">ESP</button>
          <div class="clock">15:25<br>29/04/2022</div>
          <button aria-label="Notificaciones">${icon(svg`<path fill="#f5f5f5" d="M1 1H17V14H10L6 17V14H1Z"/><path stroke="#1a2b4a" d="M4 5H14M4 8H14M4 11H10"/><circle cx="16" cy="14" r="6.500" fill="#3a4046" stroke="#aaa"/><text x="13" y="18" font-size="10" font-family="Open Sans, sans-serif" fill="#fff">2</text>`, 22)}</button>
          <span class="peek"></span>
        </div>
      </footer>
      <div class="watermark"><strong>Activar Windows</strong>Ve a Configuración para activar Windows.</div>`;
  }

  render() {
    return html`${this.header()}${this.view()}${this.footer()}`;
  }
}
